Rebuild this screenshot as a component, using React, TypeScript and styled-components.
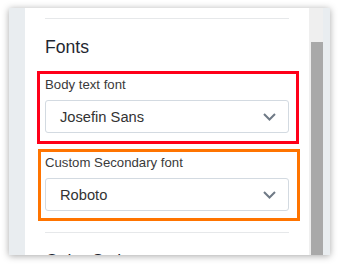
import React from "react";
import styled, { createGlobalStyle } from "styled-components";

const GlobalStyle = createGlobalStyle`
  html, body {
    margin: 0;
    padding: 0;
    background: #ffffff;
  }
  body {
    font-family: "Liberation Sans", Arial, sans-serif;
  }
`;

const Page = styled.div`
  width: 338px;
  height: 264px;
  padding: 8px 8px 0 9px;
  box-sizing: border-box;
  overflow: hidden;
`;

const Frame = styled.div`
  display: flex;
  width: 321px;
  height: 247px;
  overflow: hidden;
  background: #ffffff;
  box-shadow: 0 1px 7px rgba(0, 0, 0, 0.35);
`;

const SideStrip = styled.div<{ $w: number }>`
  flex: 0 0 ${(p) => p.$w}px;
  background: #e9edf0;
`;

const Panel = styled.div`
  flex: 0 0 284px;
  box-sizing: border-box;
  padding: 10px 20px 0 20px;
  background: #ffffff;
  overflow: hidden;
`;

const Track = styled.div`
  flex: 0 0 14px;
  display: flex;
  flex-direction: column;
  padding: 34px 0 0 2px;
  box-sizing: border-box;
  background: #efefef;
`;

const Thumb = styled.div`
  flex: 1;
  background: #a9a9a9;
`;

const Divider = styled.div<{ $top?: number }>`
  height: 1px;
  margin-top: ${(p) => p.$top ?? 0}px;
  background: #e6e8ea;
`;

const Heading = styled.h3`
  margin: 18px 0 13px;
  font-size: 17.6px;
  line-height: 21px;
  font-weight: 400;
  color: #1f2731;
`;

// annotation box around a field; it sticks out past the panel padding
const Field = styled.div<{ $color: string; $ml: number; $mr: number; $pb: number }>`
  display: flex;
  flex-direction: column;
  gap: 8px;
  margin: 0 ${(p) => p.$mr}px 0 ${(p) => p.$ml}px;
  padding: 3px ${(p) => -p.$mr - 3}px ${(p) => p.$pb}px ${(p) => -p.$ml - 3}px;
  border: 3px solid ${(p) => p.$color};
  & + & {
    margin-top: 5px;
  }
`;

const Label = styled.label`
  font-size: 13.2px;
  line-height: 15px;
  color: #3a3a3a;
`;

const Select = styled.div`
  display: flex;
  align-items: center;
  justify-content: space-between;
  height: 33px;
  box-sizing: border-box;
  padding: 0 12px 0 14px;
  border: 1px solid #d3dae1;
  border-radius: 3px;
  font-size: 14.7px;
  color: #333333;
`;

const Chevron = () => (
  <svg width="13" height="8" viewBox="0 0 13 8">
    <polyline
      points="1,1 6.5,6.5 12,1"
      fill="none"
      stroke="#6f7a86"
      strokeWidth="2"
    />
  </svg>
);

const fields = [
  { label: "Body text font", value: "Josefin Sans", color: "#ff0019", ml: -8, mr: -10, pb: 8 },
  { label: "Custom Secondary font", value: "Roboto", color: "#ff7400", ml: -7, mr: -11, pb: 7 },
];

export default function App() {
  return (
    <>
      <GlobalStyle />
      <Page>
        <Frame>
          <SideStrip $w={16} />
          <Panel>
            <Divider />
            <Heading>Fonts</Heading>
            {fields.map((f) => (
              <Field key={f.label} $color={f.color} $ml={f.ml} $mr={f.mr} $pb={f.pb}>
                <Label>{f.label}</Label>
                <Select>
                  <span>{f.value}</span>
                  <Chevron />
                </Select>
              </Field>
            ))}
            <Divider $top={11} />
            <Heading>Color Styles</Heading>
          </Panel>
          <Track>
            <Thumb />
          </Track>
          <SideStrip $w={7} />
        </Frame>
      </Page>
    </>
  );
}
